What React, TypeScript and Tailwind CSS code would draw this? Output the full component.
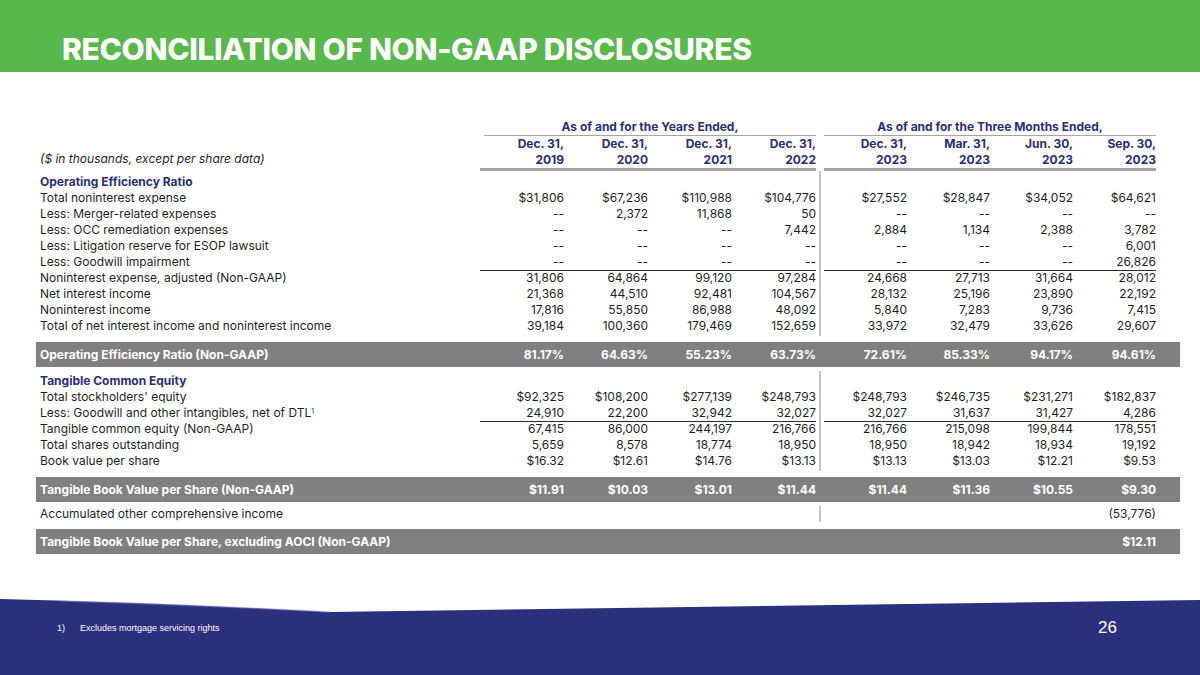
import React from 'react';

const GRID = 'grid grid-cols-[444px_repeat(4,84px)_8px_repeat(4,83px)]';

type RowProps = {
  label: React.ReactNode;
  vals: string[];
  underline?: boolean;
};

function Divider() {
  return (
    <div className="flex justify-center self-stretch">
      <div className="w-[2px] bg-[#c4c4c4]" />
    </div>
  );
}

function DataRow({ label, vals, underline }: RowProps) {
  const line = underline ? 'border-b border-[#2a2a2a]' : '';
  return (
    <div className={`${GRID} h-4 text-[12px] leading-4 text-[#1f1f1f]`}>
      <div className="pl-1 whitespace-nowrap">{label}</div>
      {vals.slice(0, 4).map((v, i) => (
        <div key={i} className={`text-right ${line}`}>{v}</div>
      ))}
      <Divider />
      {vals.slice(4).map((v, i) => (
        <div key={i} className={`text-right ${line}`}>{v}</div>
      ))}
    </div>
  );
}

function SectionRow({ title }: { title: string }) {
  return (
    <div className={`${GRID} h-4 text-[12px] leading-4`}>
      <div className="pl-1 font-bold text-[#2a2f7a]">{title}</div>
      <div className="col-span-4" />
      <Divider />
      <div className="col-span-4" />
    </div>
  );
}

function Spacer({ h, divider = true }: { h: string; divider?: boolean }) {
  return (
    <div className={`${GRID} ${h}`}>
      <div className="col-span-5" />
      {divider ? <Divider /> : <div />}
      <div className="col-span-4" />
    </div>
  );
}

function BarRow({ label, vals }: { label: string; vals: string[] }) {
  return (
    <div className={`${GRID} h-[25px] items-center bg-[#808080] text-[12px] font-bold text-white -mr-[10px] pr-[10px]`}>
      <div className="pl-1 whitespace-nowrap">{label}</div>
      {vals.slice(0, 4).map((v, i) => (
        <div key={i} className="text-right">{v}</div>
      ))}
      <div />
      {vals.slice(4).map((v, i) => (
        <div key={i} className="text-right">{v}</div>
      ))}
    </div>
  );
}

const D = '--';

const oer: RowProps[] = [
  { label: 'Total noninterest expense', vals: ['$31,806', '$67,236', '$110,988', '$104,776', '$27,552', '$28,847', '$34,052', '$64,621'] },
  { label: 'Less: Merger-related expenses', vals: [D, '2,372', '11,868', '50', D, D, D, D] },
  { label: 'Less: OCC remediation expenses', vals: [D, D, D, '7,442', '2,884', '1,134', '2,388', '3,782'] },
  { label: 'Less: Litigation reserve for ESOP lawsuit', vals: [D, D, D, D, D, D, D, '6,001'] },
  { label: 'Less: Goodwill impairment', vals: [D, D, D, D, D, D, D, '26,826'], underline: true },
  { label: 'Noninterest expense, adjusted (Non-GAAP)', vals: ['31,806', '64,864', '99,120', '97,284', '24,668', '27,713', '31,664', '28,012'] },
  { label: 'Net interest income', vals: ['21,368', '44,510', '92,481', '104,567', '28,132', '25,196', '23,890', '22,192'] },
  { label: 'Noninterest income', vals: ['17,816', '55,850', '86,988', '48,092', '5,840', '7,283', '9,736', '7,415'] },
  { label: 'Total of net interest income and noninterest income', vals: ['39,184', '100,360', '179,469', '152,659', '33,972', '32,479', '33,626', '29,607'] },
];

const tce: RowProps[] = [
  { label: "Total stockholders' equity", vals: ['$92,325', '$108,200', '$277,139', '$248,793', '$248,793', '$246,735', '$231,271', '$182,837'] },
  {
    label: (
      <>
        Less: Goodwill and other intangibles, net of DTL<sup className="text-[7px]">1</sup>
      </>
    ),
    vals: ['24,910', '22,200', '32,942', '32,027', '32,027', '31,637', '31,427', '4,286'],
    underline: true,
  },
  { label: 'Tangible common equity (Non-GAAP)', vals: ['67,415', '86,000', '244,197', '216,766', '216,766', '215,098', '199,844', '178,551'] },
  { label: 'Total shares outstanding', vals: ['5,659', '8,578', '18,774', '18,950', '18,950', '18,942', '18,934', '19,192'] },
  { label: 'Book value per share', vals: ['$16.32', '$12.61', '$14.76', '$13.13', '$13.13', '$13.03', '$12.21', '$9.53'] },
];

const headers: [string, string][] = [
  ['Dec. 31,', '2019'],
  ['Dec. 31,', '2020'],
  ['Dec. 31,', '2021'],
  ['Dec. 31,', '2022'],
  ['Dec. 31,', '2023'],
  ['Mar. 31,', '2023'],
  ['Jun. 30,', '2023'],
  ['Sep. 30,', '2023'],
];

export default function App() {
  return (
    <div className="flex flex-col w-[1200px] h-[675px] bg-white overflow-hidden font-['Inter',sans-serif]">
      <header className="h-[72px] shrink-0 bg-[#56b949] flex items-center pl-[62px] pt-[26px]">
        <h1 className="text-[30px] leading-none font-extrabold tracking-[-0.3px] text-white">
          RECONCILIATION OF NON-GAAP DISCLOSURES
        </h1>
      </header>

      <main className="flex-1 pt-[47px] pl-[36px] pr-[30px]">
        {/* group headers */}
        <div className={`${GRID} h-4 text-[12px] leading-4 font-bold text-[#2a2f7a]`}>
          <div />
          <div className="col-span-4 text-center border-b border-[#a6a6a6] h-4 box-content ml-1">As of and for the Years Ended,</div>
          <div />
          <div className="col-span-4 text-center border-b border-[#a6a6a6] h-4 box-content">As of and for the Three Months Ended,</div>
        </div>
        <div className={`${GRID} text-[12px] leading-4 font-bold text-[#2a2f7a]`}>
          <div className="pl-1 self-end mb-[4px] font-normal italic text-[#1f1f1f]">($ in thousands, except per share data)</div>
          {headers.slice(0, 4).map(([a, b], i) => (
            <div key={i} className="text-right border-b-[3px] border-[#a6a6a6] pt-[1px]">
              <div>{a}</div>
              <div>{b}</div>
            </div>
          ))}
          <div />
          {headers.slice(4).map(([a, b], i) => (
            <div key={i} className="text-right border-b-[3px] border-[#a6a6a6] pt-[1px]">
              <div>{a}</div>
              <div>{b}</div>
            </div>
          ))}
        </div>

        <Spacer h="h-[3px]" />
        <SectionRow title="Operating Efficiency Ratio" />
        {oer.map((r, i) => (
          <DataRow key={i} {...r} />
        ))}
        <Spacer h="h-[2px]" />
        <div className="h-[6px]" />
        <BarRow label="Operating Efficiency Ratio (Non-GAAP)" vals={['81.17%', '64.63%', '55.23%', '63.73%', '72.61%', '85.33%', '94.17%', '94.61%']} />
        <div className="h-[4px]" />
        <Spacer h="h-[2px]" />
        <SectionRow title="Tangible Common Equity" />
        {tce.map((r, i) => (
          <DataRow key={i} {...r} />
        ))}
        <Spacer h="h-[2px]" />
        <div className="h-[6px]" />
        <BarRow label="Tangible Book Value per Share (Non-GAAP)" vals={['$11.91', '$10.03', '$13.01', '$11.44', '$11.44', '$11.36', '$10.55', '$9.30']} />
        <div className="h-[4px]" />
        <DataRow label="Accumulated other comprehensive income" vals={['', '', '', '', '', '', '', '(53,776)']} />
        <div className="h-[7px]" />
        <BarRow label="Tangible Book Value per Share, excluding AOCI (Non-GAAP)" vals={['', '', '', '', '', '', '', '$12.11']} />
      </main>

      <footer className="relative h-[76px] shrink-0">
        <svg className="absolute inset-0" width="1200" height="76" viewBox="0 0 1200 76" preserveAspectRatio="none">
          <path d="M0 0 Q 170 4 330 13 L 1200 1 L 1200 76 L 0 76 Z" fill="#2a2f7e" />
          <path d="M60 2 Q 200 6 330 13" stroke="#8f97c9" strokeOpacity="0.45" strokeWidth="1.5" fill="none" />
        </svg>
        <div className="relative flex items-center justify-between pt-[19px] pl-[57px] pr-[83px] text-white font-['Liberation_Sans',sans-serif]">
          <div className="flex text-[9px] leading-3">
            <span className="w-[23px]">1)</span>
            <span>Excludes mortgage servicing rights</span>
          </div>
          <div className="text-[17px] leading-5">26</div>
        </div>
      </footer>
    </div>
  );
}
